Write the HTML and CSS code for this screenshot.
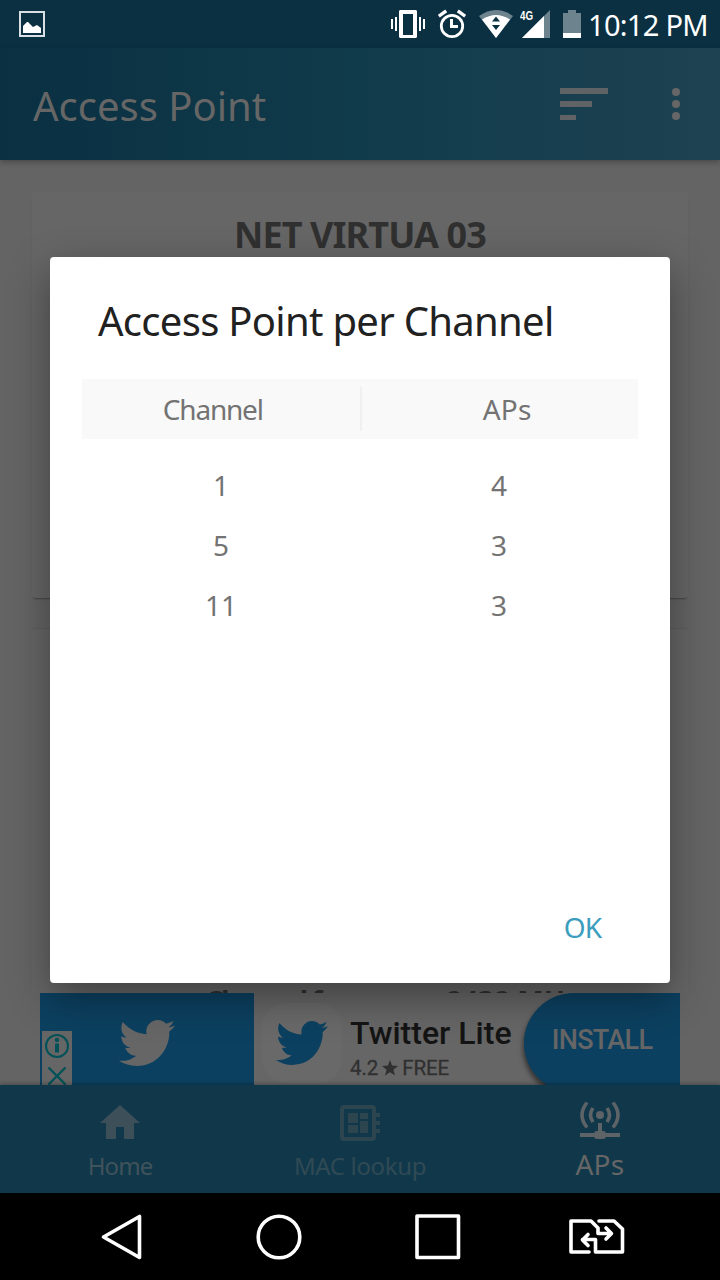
FILE: index.html
```html
<!DOCTYPE html>
<html lang="en">
<head>
<meta charset="utf-8">
<title>Access Point</title>
<link rel="stylesheet" href="styles.css">
</head>
<body>
<div class="screen">
  <header class="status">
    <svg class="status-photo" width="26" height="26" viewBox="19 11 26 26"><path d="M20 12h24v24H20z" fill="none" stroke="#d9dfe2" stroke-width="2"/><path d="M23 33v-7l4-4h1l5 5 4-2 4 3v5z" fill="#fff"/></svg>
    <div class="status-icons">
      <svg width="34" height="48" viewBox="391 0 34 48" fill="#fff"><path fill-rule="evenodd" d="M400 10h16l1 1v26l-1 1h-16l-1-1V11zM403 14v21h10V14z"/><path d="M391 19h2v10h-2zM395 17h2v14h-2zM419 17h2v14h-2zM423 19h2v10h-2z"/></svg>
      <svg width="28" height="48" viewBox="438 0 28 48" fill="none" stroke="#fff"><circle cx="452" cy="26" r="10.700" stroke-width="2.800"/><path d="M451.500 19v7.500h6.500" stroke-width="3"/><path d="M438.800 16.200l7.400-5.400M465.200 16.200l-7.400-5.400" stroke-width="3.400"/></svg>
      <svg width="34" height="48" viewBox="479 0 34 48"><path d="M479 16q17-12 34 0l-17 22z" fill="#6d838e"/><path d="M482 19.500q14-9 28 0L496 38z" fill="#fff"/><path d="M492 21.500l4-5 4 5zM492 25h8l-4 5z" fill="#0a3042"/></svg>
      <svg width="30" height="48" viewBox="520 0 30 48"><path d="M550 10v28h-28z" fill="#6d838e"/><path d="M544 16v22h-22z" fill="#fff"/><text class="status-net" x="520" y="20" textLength="13" lengthAdjust="spacingAndGlyphs">4G</text></svg>
      <svg width="18" height="48" viewBox="563 0 18 48"><path d="M568 10h8v3h5v25h-18V13h5z" fill="#6d838e"/><path d="M563 33h18v5h-18z" fill="#fff"/></svg>
    </div>
    <span class="clock">10:12 PM</span>
  </header>

  <div class="appbar">
    <h1 class="appbar-title">Access Point</h1>
    <svg width="48" height="32" viewBox="0 0 48 32" fill="#5f6365"><path d="M0 0h48v6H0zM0 13h32v6H0zM0 27h16v5H0z"/></svg>
    <svg class="more" width="8" height="32" viewBox="0 0 8 32" fill="#666"><circle cx="4" cy="4" r="4"/><circle cx="4" cy="16" r="4"/><circle cx="4" cy="28" r="4"/></svg>
  </div>

  <main class="content">
    <section class="card card-first"><h2 class="network">NET VIRTUA 03</h2></section>
    <section class="card card-second"><p class="frequency"><span class="frequency-label">Channel frequency</span><span>2432 MHz</span></p></section>
    <aside class="ad">
      <div class="ad-image">
        <div class="ad-tools">
          <svg width="24" height="24" viewBox="0 0 24 24" fill="none" stroke="#005258"><circle cx="12" cy="12" r="11" stroke-width="2"/><path d="M12 9.500v9" stroke-width="4"/><circle cx="12" cy="6" r="1.200" stroke-width="2"/></svg>
          <svg width="20" height="20" viewBox="0 0 20 20" fill="none" stroke="#005258" stroke-width="2.400"><path d="M1.500 1.500l17 17M18.500 1.500l-17 17"/></svg>
        </div>
        <svg class="ad-bird" width="56" height="46" viewBox=".937 2.752 22.706 18.496" preserveAspectRatio="none"><path id="bird" d="M23.643 4.937c-.835.37-1.732.62-2.675.733.962-.576 1.7-1.49 2.048-2.578-.9.534-1.897.922-2.958 1.13-.85-.904-2.06-1.47-3.4-1.47-2.572 0-4.658 2.086-4.658 4.66 0 .364.042.718.12 1.06-3.873-.195-7.304-2.05-9.602-4.868-.4.69-.63 1.49-.63 2.342 0 1.616.823 3.043 2.072 3.878-.764-.025-1.482-.234-2.11-.583v.06c0 2.257 1.605 4.14 3.737 4.568-.392.106-.803.162-1.227.162-.3 0-.593-.028-.877-.082.593 1.85 2.313 3.198 4.352 3.234-1.595 1.25-3.604 1.995-5.786 1.995-.376 0-.747-.022-1.112-.065 2.062 1.323 4.51 2.093 7.14 2.093 8.57 0 13.255-7.098 13.255-13.254 0-.2-.005-.402-.014-.602.91-.658 1.7-1.477 2.323-2.41z"/></svg>
      </div>
      <div class="ad-logo"><svg width="52" height="44" viewBox=".937 2.752 22.706 18.496" preserveAspectRatio="none"><use href="#bird"/></svg></div>
      <div class="ad-info">
        <div class="ad-name">Twitter Lite</div>
        <div class="ad-meta"><span>4.2</span><svg width="16" height="16" viewBox="0 0 16 16" fill="#303030"><path d="M8 0l2.100 5.600 5.900.3-4.600 3.800L13 15.500 8 12.200 3 15.500l1.600-5.800L0 5.900l5.900-.3z"/></svg><span>FREE</span></div>
      </div>
      <div class="ad-install"><span>INSTALL</span></div>
    </aside>
  </main>

  <nav class="tabs">
    <div class="tab">
      <svg width="40" height="34" viewBox="0 0 40 34" fill="#3d4f58"><path d="M20 0l20 18h-6v16H24V22h-8v12H6V18H0z"/></svg>
      <span>Home</span>
    </div>
    <div class="tab tab-mac">
      <svg width="40" height="36" viewBox="0 0 40 36"><rect x="2" y="2" width="32" height="32" rx="2" fill="none" stroke="#2c454f" stroke-width="4"/><path d="M8 8h10v10H8zM20 8h8v6h-8zM8 20h10v8H8zM20 16h8v12h-8zM36 8h4v4h-4zM36 16h4v4h-4zM36 24h4v4h-4z" fill="#2c454f"/></svg>
      <span>MAC lookup</span>
    </div>
    <div class="tab tab-active">
      <svg width="40" height="38" viewBox="0 0 40 38" fill="none" stroke="#5d6366" stroke-width="4"><circle cx="20" cy="14" r="4" fill="#5d6366" stroke="none"/><path d="M13 7q-5 7 0 14M27 7q5 7 0 14M7 1.500q-10 12.500 0 25M33 1.500q10 12.500 0 25" stroke-width="3.600"/><path d="M20 22v9M0 34h40"/><rect x="14" y="30" width="12" height="8" rx="3" fill="#5d6366" stroke="none"/></svg>
      <span>APs</span>
    </div>
  </nav>

  <footer class="sysbar">
    <svg width="42" height="46" viewBox="0 0 42 46"><path d="M38.500 2.500v41L2.500 23z"/></svg>
    <svg width="46" height="46" viewBox="0 0 46 46"><circle cx="23" cy="23" r="20.800"/></svg>
    <svg width="46" height="46" viewBox="0 0 46 46"><rect x="2" y="2" width="41.500" height="41.500"/></svg>
    <svg width="56" height="46" viewBox="570 1214 56 46"><path d="M590 1252h-18v-31h20l7 7v5.500h13M607 1228l5.500 5.500-5.500 5.500M600 1221h15l8.500 8v23h-27v-12.500h-13M589 1234.500l-5.500 5.500 5.500 5.500"/></svg>
  </footer>

  <div class="dialog" role="dialog">
    <h2 class="dialog-title">Access Point per Channel</h2>
    <div class="grid-head"><span class="col-channel">Channel</span><i class="divider"></i><span class="col-aps">APs</span></div>
    <div class="grid-body">
      <span>1</span><span>4</span>
      <span>5</span><span>3</span>
      <span>11</span><span>3</span>
    </div>
    <div class="actions"><span class="ok">OK</span></div>
  </div>
</div>
</body>
</html>
```
FILE: styles.css
```css
* { box-sizing: border-box; }
body, h1, h2, p { margin: 0; }
body { font-family: "Noto Sans", "Open Sans", sans-serif; background: #000; }
svg { display: block; flex: none; }
.screen { position: relative; width: 720px; height: 1280px; display: flex; flex-direction: column; overflow: hidden; white-space: nowrap; }

.status { height: 48px; background: #0a3042; display: flex; align-items: center; padding-left: 19px; }
.status-icons { display: flex; margin-left: 346px; }
.status-icons svg + svg { margin-left: 13px; }
.status-icons svg:nth-child(4) { margin-left: 7px; }
.status-net { font: bold 12px "Liberation Sans", sans-serif; fill: #fff; }
.clock { margin-left: 7px; color: #fff; font-size: 29px; line-height: 48px; letter-spacing: -.7px; padding-top: 1px; }

.appbar { position: relative; z-index: 1; height: 112px; background: linear-gradient(90deg, #0a3042, #103b4b 50%, #1e4252); display: flex; align-items: center; padding: 0 40px 0 32px; box-shadow: 0 2px 6px rgba(0, 0, 0, .3); }
.appbar-title { flex: 1; font-size: 40px; font-weight: 400; color: #666; line-height: 112px; padding: 3px 0 0 1px; }
.more { margin-left: 64px; }

.content { height: 925px; background: #646464; padding: 32px 32px 0; display: flex; flex-direction: column; }
.card { background: #666; border-radius: 4px; box-shadow: 0 2px 2px -1px rgba(0, 0, 0, .35); }
.card-first { height: 406px; margin-bottom: 31px; text-align: center; padding-top: 17px; }
.network { font-size: 36px; font-weight: 700; line-height: 52px; color: #303030; letter-spacing: -.9px; }
.card-second { height: 364px; padding: 354px 0 0 173px; overflow: hidden; box-shadow: 0 -1px 1px rgba(0, 0, 0, .06); }
.frequency { display: flex; font-size: 28px; font-weight: 700; line-height: 36px; color: #303030; }
.frequency-label { width: 241px; letter-spacing: -1.9px; }

.ad { margin: 0 8px; width: 640px; height: 92px; background: #666; display: flex; overflow: hidden; }
.ad-image { width: 214px; background: #0c4060; display: flex; padding-left: 2px; }
.ad-tools { width: 30px; height: 54px; margin-top: 38px; background: #666; display: flex; flex-direction: column; align-items: center; padding-top: 3px; gap: 8px; }
.ad-bird { margin: 27px 0 0 47px; fill: #666; }
.ad-logo { width: 80px; height: 80px; margin: 10px 0 0 8px; border-radius: 24px; background: #696969; padding: 18px 14px; fill: #0c4060; }
.ad-info { width: 182px; padding: 20px 0 0 8px; font-family: Roboto, sans-serif; }
.ad-name { font-size: 32px; font-weight: 500; line-height: 40px; color: #141414; }
.ad-meta { display: flex; align-items: center; gap: 4px; margin-top: 2px; font-size: 20.5px; line-height: 26px; color: #303030; -webkit-text-stroke: .3px #303030; letter-spacing: -.1px; }
.ad-install { width: 156px; height: 100px; background: #0c4060; border-radius: 50px 0 0 50px; box-shadow: -1px 4px 5px rgba(0, 0, 0, .5); font: 500 27px/95px Roboto, sans-serif; letter-spacing: -.7px; color: #666; text-align: center; }

.tabs { position: relative; height: 108px; background: #10384a; display: grid; grid-template-columns: repeat(3, 240px); box-shadow: 0 -1px 4px rgba(0, 0, 0, .3); }
.tab { display: flex; flex-direction: column; align-items: center; padding-top: 20px; font-size: 24px; line-height: 32px; color: #40525b; letter-spacing: -.9px; }
.tab span { margin-top: 11px; }
.tab-mac { letter-spacing: -.35px; }
.tab-mac span { margin-top: 9px; color: #304a55; }
.tab-active { padding-top: 16px; font-size: 28px; color: #666; letter-spacing: .3px; }
.tab-active span { margin-top: 9px; }

.sysbar { height: 87px; background: #000; display: flex; align-items: center; padding-left: 101px; }
.sysbar svg { position: relative; fill: none; stroke: #fff; stroke-width: 3.6; stroke-linejoin: round; stroke-linecap: round; }
.sysbar svg:nth-child(2) { margin-left: 113px; }
.sysbar svg:nth-child(3) { margin-left: 113px; }
.sysbar svg:nth-child(4) { margin-left: 108px; }

.dialog { position: absolute; z-index: 2; left: 50px; top: 257px; width: 620px; height: 726px; background: #fff; border-radius: 4px; box-shadow: 0 14px 40px rgba(0, 0, 0, .38); padding: 36px 32px 0; display: flex; flex-direction: column; }
.dialog-title { margin-left: 16px; font-size: 40px; font-weight: 400; line-height: 56px; color: #212121; letter-spacing: -.7px; }
.grid-head { margin-top: 30px; height: 60px; background: #f9f9f9; display: flex; align-items: center; font-size: 28px; color: #737373; }
.grid-head span { flex: 1; text-align: center; }
.grid-head .col-channel { padding-right: 16px; letter-spacing: -1.2px; }
.grid-head .col-aps { padding-left: 15px; letter-spacing: .3px; }
.divider { width: 2px; height: 44px; background: #f0f0f0; }
.grid-body { margin-top: 16px; display: grid; grid-template-columns: 1fr 1fr; grid-auto-rows: 60px; font-size: 28px; line-height: 60px; color: #737373; text-align: center; }
.actions { margin-top: auto; padding: 0 37px 35px 0; text-align: right; }
.ok { font-size: 28px; line-height: 42px; color: #3a9dbd; letter-spacing: -1px; }
```
